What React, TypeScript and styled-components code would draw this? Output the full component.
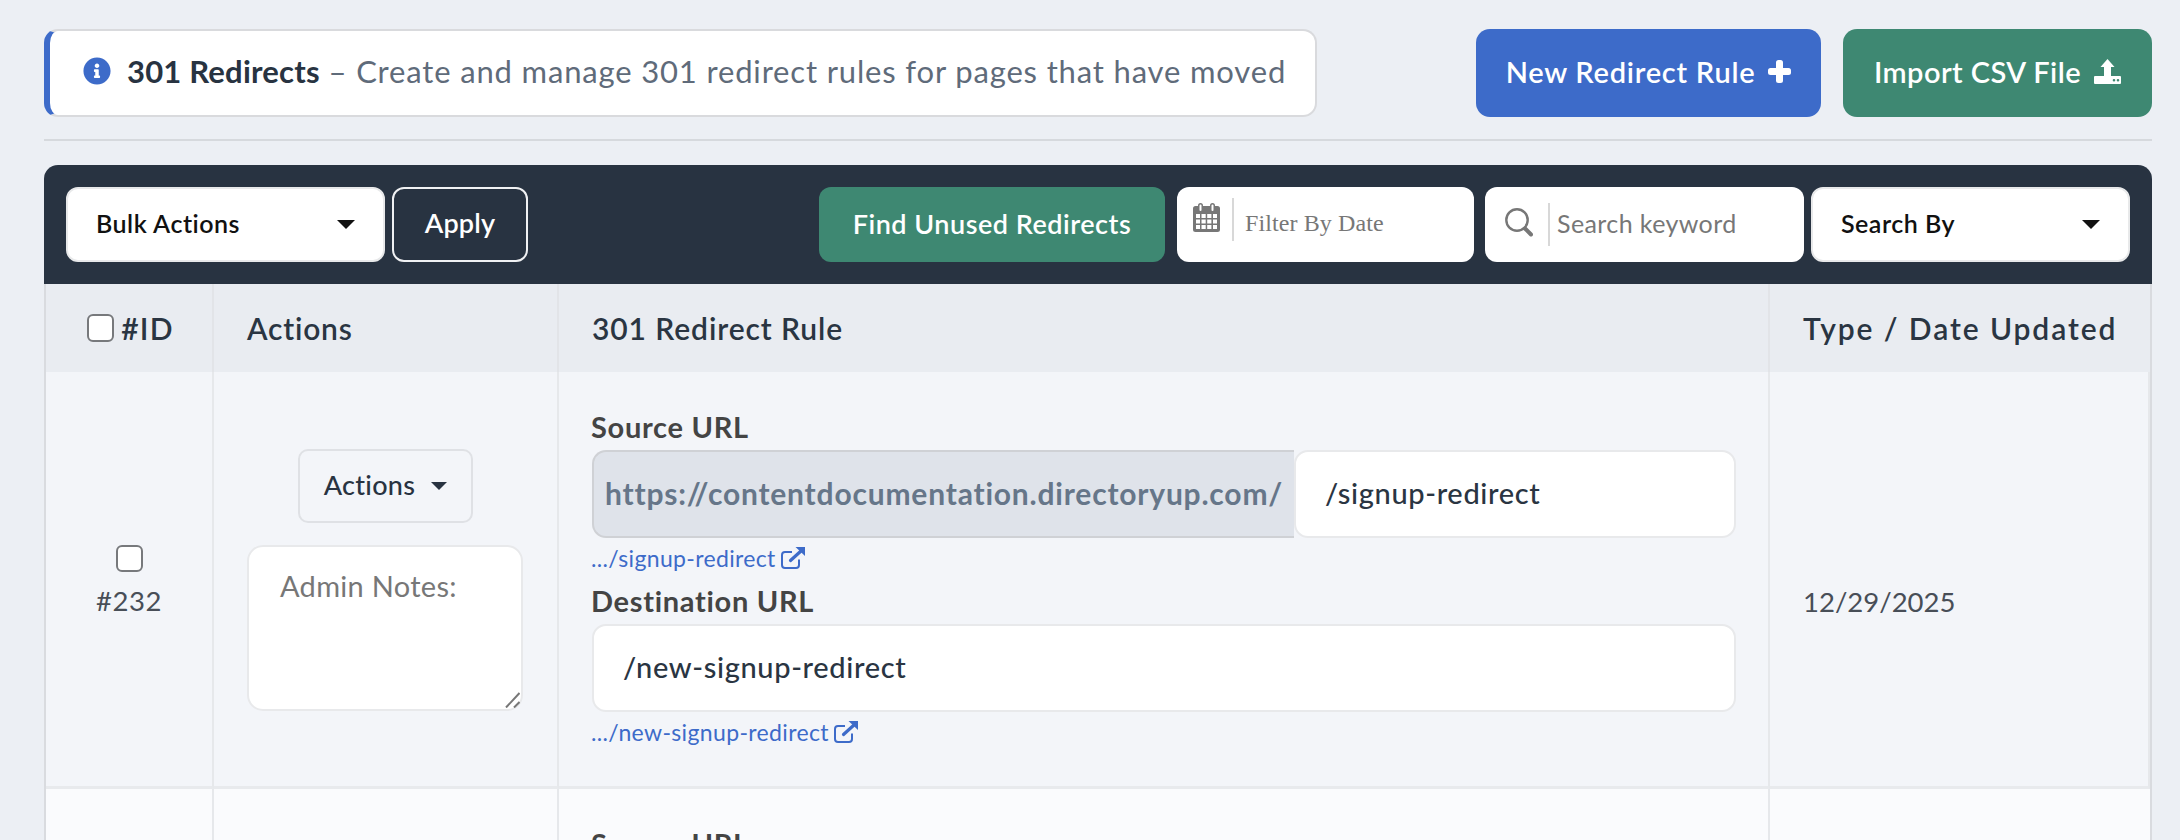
import React from "react";
import styled, { createGlobalStyle } from "styled-components";
import { FaInfoCircle } from "react-icons/fa";

const Global = createGlobalStyle`
  html, body { margin: 0; padding: 0; background: #eceff4; }
  body { font-family: "Lato", "Noto Sans", sans-serif; height: 840px; overflow: hidden; }
  * { box-sizing: border-box; }
`;

const Page = styled.div`
  height: 840px;
  overflow: hidden;
  padding: 29px 28px 0 44px;
`;
const TopBar = styled.header`
  display: flex;
  align-items: flex-start;
  gap: 22px;
  padding-bottom: 22px;
  border-bottom: 2px solid #d6d9dd;
`;
const Notice = styled.div`
  width: 1273px;
  height: 88px;
  margin-right: 137px;
  display: flex;
  align-items: center;
  gap: 16px;
  padding: 0 0 5px 33px;
  background: #fff;
  border: 2px solid #d9dadd;
  border-left: 6px solid #3d6bc9;
  border-radius: 14px;
  font-size: 31px;
  letter-spacing: 0.84px;
  color: #5f6b7a;
  white-space: nowrap;
`;
const NoticeTitle = styled.strong`
  font-weight: 700;
  letter-spacing: 0.2px;
  color: #283341;
`;
const NoticeText = styled.span`
  white-space: nowrap;
`;
const BigButton = styled.button<{ $bg: string; $w: number; $ls: number }>`
  width: ${(p) => p.$w}px;
  height: 88px;
  flex: none;
  display: flex;
  align-items: center;
  justify-content: center;
  gap: 13px;
  border: 0;
  border-radius: 14px;
  background: ${(p) => p.$bg};
  color: #fff;
  font: 600 29px "Lato", sans-serif;
  letter-spacing: ${(p) => p.$ls}px;
  padding: 0 0 4px;
`;
const Toolbar = styled.div`
  margin-top: 24px;
  height: 119px;
  display: flex;
  align-items: center;
  padding: 0 22px;
  background: #283341;
  border-radius: 14px 14px 0 0;
`;
const SelectBox = styled.div<{ $ml?: number }>`
  width: 319px;
  height: 75px;
  flex: none;
  display: flex;
  align-items: center;
  justify-content: space-between;
  padding: 0 28px 3px 28px;
  margin-left: ${(p) => p.$ml ?? 0}px;
  background: #fff;
  border: 2px solid #e8e9ea;
  border-radius: 12px;
  color: #111;
  font-weight: 600;
  font-size: 25px;
  letter-spacing: 0.5px;
`;
const Caret = styled.i<{ $c?: string; $s?: number }>`
  display: block;
  width: 0;
  height: 0;
  margin-top: 3px;
  border-left: ${(p) => p.$s ?? 9}px solid transparent;
  border-right: ${(p) => p.$s ?? 9}px solid transparent;
  border-top: ${(p) => p.$s ?? 9}px solid ${(p) => p.$c ?? "#111"};
`;
const GhostButton = styled.button`
  width: 136px;
  height: 75px;
  margin-left: 7px;
  padding: 0 0 4px;
  background: transparent;
  border: 2px solid #f0f1f3;
  border-radius: 12px;
  color: #fff;
  font: 600 27px "Lato", sans-serif;
  letter-spacing: 0.2px;
`;
const FindButton = styled.button`
  width: 346px;
  height: 75px;
  margin-left: auto;
  padding: 0 0 3px;
  border: 0;
  border-radius: 12px;
  background: #3e8872;
  color: #fff;
  font: 600 27px "Lato", sans-serif;
  letter-spacing: 0.5px;
`;
const FilterBox = styled.div<{ $w: number; $ml: number; $pl: number }>`
  width: ${(p) => p.$w}px;
  height: 75px;
  margin-left: ${(p) => p.$ml}px;
  flex: none;
  display: flex;
  align-items: center;
  background: #fff;
  border-radius: 12px;
  padding-left: ${(p) => p.$pl}px;
`;
const IconSlot = styled.span<{ $up: number }>`
  display: flex;
  flex: none;
  margin-bottom: ${(p) => p.$up}px;
`;
const FilterDivider = styled.span<{ $l: number; $r: number; $up: number }>`
  display: block;
  flex: none;
  width: 2px;
  height: 43px;
  margin: 0 ${(p) => p.$r}px ${(p) => p.$up}px ${(p) => p.$l}px;
  background: #d8d8d8;
`;
const FilterText = styled.span<{ $serif?: boolean }>`
  color: #777;
  padding-bottom: ${(p) => (p.$serif ? 2 : 3)}px;
  font-family: ${(p) => (p.$serif ? '"Liberation Serif", serif' : '"Lato", sans-serif')};
  font-size: ${(p) => (p.$serif ? 24 : 25)}px;
  letter-spacing: ${(p) => (p.$serif ? 0.1 : 0.4)}px;
`;
const Table = styled.div`
  display: grid;
  grid-template-columns: 168px 345px 1211px 1fr;
  border-left: 2px solid #d9dbdf;
  border-right: 2px solid #d9dbdf;
`;
const HeadCell = styled.div<{ $center?: boolean; $ls: number }>`
  height: 88px;
  display: flex;
  align-items: center;
  justify-content: ${(p) => (p.$center ? "center" : "flex-start")};
  gap: 7px;
  padding-left: ${(p) => (p.$center ? 3 : 33)}px;
  background: #e9ecf1;
  border-right: 2px solid #e2e4e8;
  color: #2a3542;
  font-weight: 600;
  font-size: 30px;
  letter-spacing: ${(p) => p.$ls}px;
  white-space: nowrap;
  &:nth-child(4) { border-right: 0; }
`;
const Cell = styled.div<{ $alt?: boolean }>`
  background: ${(p) => (p.$alt ? "#fafbfd" : "#f3f5f9")};
  border-right: 2px solid #e6e8eb;
  border-bottom: ${(p) => (p.$alt ? 0 : 3)}px solid #e8eaed;
  &:last-child { border-right: 0; }
`;
const IdCell = styled(Cell)`
  display: flex;
  flex-direction: column;
  align-items: center;
  justify-content: center;
  gap: 12px;
  padding-top: 4px;
  color: #484e57;
  font-size: 27.5px;
  letter-spacing: 0.5px;
`;
const Box = styled.span<{ $h: number }>`
  display: block;
  width: 27px;
  height: ${(p) => p.$h}px;
  flex: none;
  background: #fff;
  border: 2px solid #77797c;
  border-radius: 6px;
`;
const ActionsCell = styled(Cell)`
  display: flex;
  flex-direction: column;
  align-items: center;
  padding-top: 77px;
`;
const ActionsButton = styled.button`
  width: 175px;
  height: 74px;
  display: flex;
  align-items: center;
  justify-content: center;
  gap: 16px;
  padding: 0 0 3px;
  background: transparent;
  border: 2px solid #dfe1e5;
  border-radius: 10px;
  color: #283341;
  font: 500 27px "Lato", sans-serif;
  letter-spacing: 0.3px;
`;
const NotesWrap = styled.div`
  position: relative;
  width: 276px;
  height: 166px;
  margin: 22px 1px 0 0;
`;
const Notes = styled.textarea`
  display: block;
  width: 100%;
  height: 100%;
  padding: 21px 31px;
  resize: none;
  background: #fff;
  border: 2px solid #e8e9eb;
  border-radius: 16px;
  font: 400 29px "Lato", sans-serif;
  letter-spacing: 0.3px;
  color: #333;
  &::placeholder { color: #777; opacity: 1; }
`;
const Grip = styled.svg`
  position: absolute;
  right: 3px;
  bottom: 3px;
`;
const RuleCell = styled(Cell)`
  padding: 35px 32px 0 33px;
  height: 417px;
`;
const FieldLabel = styled.label`
  display: block;
  height: 43px;
  margin-left: -1px;
  line-height: 40px;
  color: #444;
  font-weight: 700;
  font-size: 29px;
  letter-spacing: 0.7px;
`;
const InputGroup = styled.div`
  display: flex;
  height: 88px;
`;
const Addon = styled.span`
  flex: none;
  width: 702px;
  display: flex;
  align-items: center;
  padding: 0 0 3px 11px;
  background: #dfe3ea;
  border: 2px solid #cfd1d5;
  border-right: 0;
  border-radius: 14px 0 0 14px;
  color: #667689;
  font-weight: 700;
  font-size: 30px;
  letter-spacing: 0.8px;
  white-space: nowrap;
`;
const TextInput = styled.input`
  flex: 1;
  width: 100%;
  min-width: 0;
  height: 88px;
  padding: 0 29px 3px;
  background: #fff;
  border: 2px solid #e8e9eb;
  border-radius: 14px;
  color: #2a3542;
  font: 500 29px "Lato", sans-serif;
  letter-spacing: 0.65px;
  outline: 0;
`;
const UrlLink = styled.a`
  display: flex;
  align-items: center;
  gap: 5px;
  height: 43px;
  margin-left: -1px;
  padding-bottom: 4px;
  color: #3d6bc9;
  font-size: 23px;
  letter-spacing: 0.35px;
`;
const DateCell = styled(Cell)`
  display: flex;
  align-items: center;
  padding: 44px 0 0 33px;
  color: #484e57;
  font-size: 27.5px;
`;

const CalendarIcon = () => (
  <svg width="27" height="29" viewBox="0 0 27 29" fill="#777">
    <path
      fillRule="evenodd"
      d="M2.500 3H5V2.500a2.500 2.500 0 0 1 5 0V3h7v-.5a2.500 2.500 0 0 1 5 0V3h2.500A2.500 2.500 0 0 1 27 5.500v21a2.500 2.500 0 0 1-2.500 2.500h-22A2.500 2.500 0 0 1 0 26.500v-21A2.500 2.500 0 0 1 2.500 3zM6.500 2.500V7a1 1 0 0 0 2 0V2.500a1 1 0 0 0-2 0zm12 0V7a1 1 0 0 0 2 0V2.500a1 1 0 0 0-2 0zM3 11v4h4v-4zm5.500 0v4h4.200v-4zm5.700 0v4h4.200v-4zm5.800 0v4h4v-4zM3 16.500v4h4v-4zm5.500 0v4h4.200v-4zm5.700 0v4h4.200v-4zm5.800 0v4h4v-4zM3 22v4h4v-4zm5.500 0v4h4.200v-4zm5.700 0v4h4.200v-4zm5.800 0v4h4v-4z"
    />
  </svg>
);
const SearchIcon = () => (
  <svg width="28" height="29" viewBox="0 0 28 29" fill="none" stroke="#777">
    <circle cx="12" cy="12" r="10.700" strokeWidth="2.400" />
    <path d="M20 20.500L26 26.500" strokeWidth="4" strokeLinecap="round" />
  </svg>
);
const PlusIcon = () => (
  <svg width="23" height="23" viewBox="0 0 23 23" fill="#fff">
    <rect x="8" y="0" width="7" height="23" rx="2.500" />
    <rect x="0" y="8" width="23" height="7" rx="2.500" />
  </svg>
);
const UploadIcon = () => (
  <svg width="27" height="25" viewBox="0 0 27 25" fill="#fff">
    <path
      fillRule="evenodd"
      d="M13.500 0l7 8h-3.500v9H26a1 1 0 0 1 1 1v6a1 1 0 0 1-1 1H1a1 1 0 0 1-1-1v-6a1 1 0 0 1 1-1h9V8H6.500zM20 20a1.300 1.300 0 1 0 0 2.600 1.300 1.300 0 0 0 0-2.600zm4 0a1.300 1.300 0 1 0 0 2.600 1.300 1.300 0 0 0 0-2.600z"
    />
  </svg>
);
const ExternalIcon = () => (
  <svg width="24" height="22" viewBox="0 0 24 22" fill="none" stroke="#3d6bc9">
    <path d="M18 12.500V18a3 3 0 0 1-3 3H4a3 3 0 0 1-3-3V8a3 3 0 0 1 3-3h7" strokeWidth="2" />
    <path d="M9.500 13.500L20 4" strokeWidth="3.200" strokeLinecap="round" />
    <path d="M14.500 0H24v9z" fill="#3d6bc9" stroke="none" />
  </svg>
);

export default function App() {
  return (
    <Page>
      <Global />
      <TopBar>
        <Notice>
          <FaInfoCircle size={28} color="#3d6bc9" />
          <NoticeText>
            <NoticeTitle>301 Redirects</NoticeTitle> – Create and manage 301 redirect rules for pages that have moved
          </NoticeText>
        </Notice>
        <BigButton $bg="#3d6bc9" $w={345} $ls={0.75}>
          New Redirect Rule <PlusIcon />
        </BigButton>
        <BigButton $bg="#3e8872" $w={309} $ls={0.45}>
          Import CSV File <UploadIcon />
        </BigButton>
      </TopBar>
      <Toolbar>
        <SelectBox>
          Bulk Actions <Caret />
        </SelectBox>
        <GhostButton>Apply</GhostButton>
        <FindButton>Find Unused Redirects</FindButton>
        <FilterBox $w={297} $ml={12} $pl={16}>
          <IconSlot $up={14}>
            <CalendarIcon />
          </IconSlot>
          <FilterDivider $l={12} $r={11} $up={10} />
          <FilterText $serif>Filter By Date</FilterText>
        </FilterBox>
        <FilterBox $w={319} $ml={11} $pl={20}>
          <IconSlot $up={5}>
            <SearchIcon />
          </IconSlot>
          <FilterDivider $l={15} $r={7} $up={0} />
          <FilterText>Search keyword</FilterText>
        </FilterBox>
        <SelectBox $ml={7}>
          Search By <Caret />
        </SelectBox>
      </Toolbar>
      <Table>
        <HeadCell $center $ls={1.2}>
          <Box $h={28} />
          #ID
        </HeadCell>
        <HeadCell $ls={0.8}>Actions</HeadCell>
        <HeadCell $ls={0.9}>301 Redirect Rule</HeadCell>
        <HeadCell $ls={1.9}>Type / Date Updated</HeadCell>

        <IdCell>
          <Box $h={27} />
          #232
        </IdCell>
        <ActionsCell>
          <ActionsButton>
            Actions <Caret $c="#283341" $s={8} />
          </ActionsButton>
          <NotesWrap>
            <Notes placeholder="Admin Notes:" />
            <Grip width="15" height="16" viewBox="0 0 15 16" stroke="#777" strokeWidth="2">
              <path d="M1 15.500L14.500 1M9 15.500L14.500 10" fill="none" />
            </Grip>
          </NotesWrap>
        </ActionsCell>
        <RuleCell>
          <FieldLabel>Source URL</FieldLabel>
          <InputGroup>
            <Addon>https://contentdocumentation.directoryup.com/</Addon>
            <TextInput defaultValue="/signup-redirect" />
          </InputGroup>
          <UrlLink>
            .../signup-redirect <ExternalIcon />
          </UrlLink>
          <FieldLabel>Destination URL</FieldLabel>
          <TextInput defaultValue="/new-signup-redirect" />
          <UrlLink>
            .../new-signup-redirect <ExternalIcon />
          </UrlLink>
        </RuleCell>
        <DateCell>12/29/2025</DateCell>

        <Cell $alt />
        <Cell $alt />
        <RuleCell $alt>
          <FieldLabel>Source URL</FieldLabel>
        </RuleCell>
        <Cell $alt />
      </Table>
    </Page>
  );
}
